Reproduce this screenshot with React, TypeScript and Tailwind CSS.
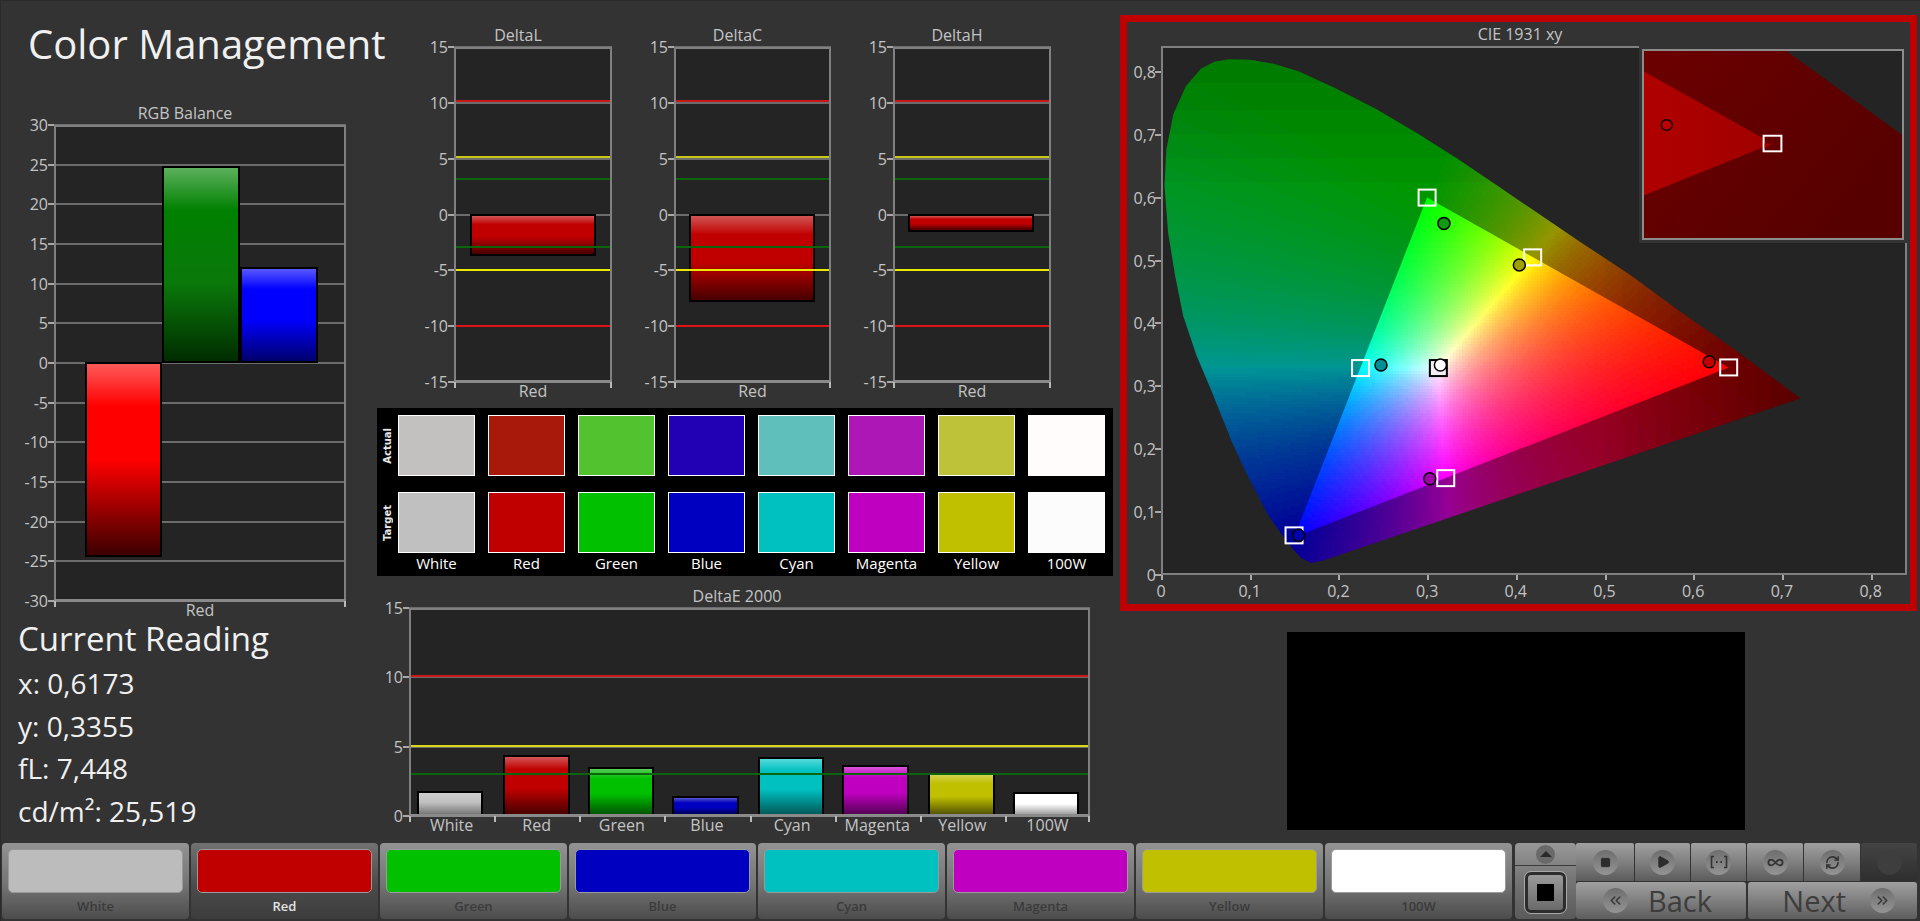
import { ChevronsLeft, ChevronsRight, Infinity as InfinityIcon, Play, RefreshCw, Square } from 'lucide-react';
import type { ReactNode } from 'react';

type Bar = { left: number; width: number; value: number; fill: string };
type Limit = { value: number; color: string };

const RED_BAR = 'bg-[linear-gradient(to_bottom,#d25555_0%,#c00000_22%,#c00000_55%,#480000_100%)]';

const DELTA_LIMITS: Limit[] = [
  { value: 10.15, color: 'bg-[#c81818]' },
  { value: 5.12, color: 'bg-[#c8c818]' },
  { value: 3.14, color: 'bg-[#0b660b]' },
  { value: -2.95, color: 'bg-[#0b660b]' },
  { value: -4.96, color: 'bg-[#e8e800]' },
  { value: -9.98, color: 'bg-[#e01414]' },
];

const E_LIMITS: Limit[] = [
  { value: 10.1, color: 'bg-[#c81818]' },
  { value: 5.02, color: 'bg-[#d8d818]' },
  { value: 3.03, color: 'bg-[#0b660b]' },
];

const PATCHES = [
  { name: 'White', actual: 'bg-[#c2c1c0]', target: 'bg-[#c0c0c0]', button: 'bg-[#bcbcbc]', bar: 'bg-[linear-gradient(to_bottom,#cdcdcd_0%,#c0c0c0_45%,#777777_100%)]', left: 8, width: 66, value: 1.75 },
  { name: 'Red', actual: 'bg-[#a8190c]', target: 'bg-[#c00000]', button: 'bg-[#c00000]', bar: RED_BAR, left: 94, width: 67, value: 4.3 },
  { name: 'Green', actual: 'bg-[#52c22e]', target: 'bg-[#00c000]', button: 'bg-[#00c000]', bar: 'bg-[linear-gradient(to_bottom,#55cc55_0%,#00c000_22%,#00c000_55%,#005500_100%)]', left: 179, width: 66, value: 3.45 },
  { name: 'Blue', actual: 'bg-[#2200b4]', target: 'bg-[#0000c0]', button: 'bg-[#0000c0]', bar: 'bg-[linear-gradient(to_bottom,#5555cc_0%,#0000c0_30%,#0000c0_60%,#000055_100%)]', left: 263, width: 67, value: 1.35 },
  { name: 'Cyan', actual: 'bg-[#5ebfbb]', target: 'bg-[#00c0c0]', button: 'bg-[#00c0c0]', bar: 'bg-[linear-gradient(to_bottom,#55dada_0%,#00c0c0_22%,#00c0c0_55%,#005a5a_100%)]', left: 349, width: 66, value: 4.2 },
  { name: 'Magenta', actual: 'bg-[#ad17b6]', target: 'bg-[#c000c0]', button: 'bg-[#c000c0]', bar: 'bg-[linear-gradient(to_bottom,#d855d8_0%,#c000c0_22%,#c000c0_55%,#550055_100%)]', left: 433, width: 67, value: 3.6 },
  { name: 'Yellow', actual: 'bg-[#bec238]', target: 'bg-[#c0c000]', button: 'bg-[#c0c000]', bar: 'bg-[linear-gradient(to_bottom,#d2d250_0%,#c0c000_22%,#c0c000_55%,#555500_100%)]', left: 519, width: 67, value: 3 },
  { name: '100W', actual: 'bg-[#fffcfb]', target: 'bg-[#fcfcfc]', button: 'bg-[#ffffff]', bar: 'bg-[linear-gradient(to_bottom,#ffffff_0%,#ffffff_50%,#a0a0a0_100%)]', left: 604, width: 66, value: 1.65 },
];

function Chart({
  title,
  axisClass,
  rootClass,
  plotClass,
  height,
  min,
  max,
  step,
  bars,
  limits = [],
  labels,
  dividers = false,
}: {
  title: string;
  axisClass: string;
  rootClass: string;
  plotClass: string;
  height: number;
  min: number;
  max: number;
  step: number;
  bars: Bar[];
  limits?: Limit[];
  labels: string[];
  dividers?: boolean;
}) {
  const yOf = (v: number) => ((max - v) / (max - min)) * height;
  const ticks: number[] = [];
  for (let v = max; v >= min; v -= step) ticks.push(v);
  const edges = dividers ? labels.length : 1;

  return (
    <div className={rootClass}>
      <div className="h-[21px] -translate-y-px text-center text-[16px] leading-[21px] text-[#c4c4c4]">{title}</div>
      <div className={axisClass}>
        <div className={`relative bg-[#242424] ${plotClass}`}>
          {ticks.map((v) => (
            <div key={v}>
              <div className="absolute left-0 right-0 h-[2px] bg-[#6c6c6c]" style={{ top: yOf(v) - 1 }} />
              <div className="absolute left-[-6px] h-[2px] w-[6px] bg-[#a8a8a8]" style={{ top: yOf(v) - 1 }} />
              <div
                className="absolute right-full mr-[6px] text-[16px] leading-[20px] text-[#c4c4c4]"
                style={{ top: yOf(v) - 10 }}
              >
                {v}
              </div>
            </div>
          ))}
          {bars.map((b) => {
            const top = yOf(Math.max(b.value, 0));
            const bottom = yOf(Math.min(b.value, 0));
            return (
              <div
                key={b.left}
                className={`absolute box-border border-2 border-black ${b.fill}`}
                style={{ left: b.left, width: b.width, top: top - 1, height: bottom - top + 1 }}
              />
            );
          })}
          {limits.map((l) => (
            <div
              key={l.value}
              className={`absolute left-0 right-0 h-[2px] ${l.color}`}
              style={{ top: yOf(l.value) - 1 }}
            />
          ))}
          <div className="absolute inset-0 border-2 border-b-0 border-[#808080]" />
          <div className="absolute bottom-[-1px] left-0 right-0 h-[3px] bg-[#8a8a8a]" />
          {Array.from({ length: edges + 1 }, (_, i) => (
            <div
              key={i}
              className="absolute bottom-[-6px] h-[6px] w-[2px] bg-[#b8b8b8]"
              style={{ left: `calc(${(i / edges) * 100}% - ${i === edges ? 2 : 0}px)` }}
            />
          ))}
        </div>
        <div className="-mt-px flex h-[20px]">
          {labels.map((l) => (
            <div key={l} className="flex-1 text-center text-[16px] leading-[20px] text-[#c4c4c4]">
              {l}
            </div>
          ))}
        </div>
      </div>
    </div>
  );
}

// chromaticity outline read off the diagram, not the real spectral locus
const LOCUS = [
  [0.183, 0.023], [0.169, 0.019], [0.158, 0.027], [0.149, 0.041], [0.137, 0.063], [0.12, 0.097],
  [0.097, 0.16], [0.08, 0.211], [0.057, 0.292], [0.04, 0.349], [0.025, 0.412], [0.016, 0.475],
  [0.008, 0.544], [0.004, 0.619], [0.006, 0.676], [0.014, 0.733], [0.028, 0.777], [0.045, 0.805],
  [0.06, 0.816], [0.077, 0.82], [0.1, 0.819], [0.126, 0.813], [0.155, 0.801], [0.195, 0.775],
  [0.241, 0.742], [0.287, 0.704], [0.333, 0.663], [0.379, 0.619], [0.425, 0.575], [0.471, 0.531],
  [0.528, 0.478], [0.586, 0.418], [0.643, 0.362], [0.721, 0.281],
];
const GAMUT = [[0.64, 0.33], [0.3, 0.6], [0.15, 0.06]];

const CIE_W = 746;
const CIE_H = 529;
const px = (x: number) => x * 887;
const py = (y: number) => CIE_H - y * 629;
const points = (list: number[][]) => list.map(([x, y]) => `${px(x).toFixed(1)},${py(y).toFixed(1)}`).join(' ');

function xyColor(x: number, y: number, dim: boolean) {
  const X = x / y;
  const Z = (1 - x - y) / y;
  const rgb = [
    3.2406 * X - 1.5372 - 0.4986 * Z,
    -0.9689 * X + 1.8758 + 0.0415 * Z,
    0.0557 * X - 0.204 + 1.057 * Z,
  ].map((c) => Math.max(c, 0));
  const top = Math.max(...rgb);
  let k = 1;
  if (dim) {
    k = 0.58;
    if (x > 0.5) k -= (x - 0.5) * 1.05;
    if (y > 0.62) k -= (y - 0.62) * 0.5;
  }
  return rgb.map((c) => Math.round(((c / top) * k * 255) / 5) * 5);
}

// small cells merged into one path per colour, the clip paths give the clean edge
function buildCells(x0: number, x1: number, y0: number, y1: number, dim: boolean) {
  const groups = new Map<string, string>();
  const size = 3;
  for (let sx = px(x0); sx < px(x1); sx += size) {
    for (let sy = py(y1); sy < py(y0); sy += size) {
      const x = (sx + size / 2) / 887;
      const y = (CIE_H - sy - size / 2) / 629;
      if (y <= 0.002) continue;
      const c = xyColor(x, y, dim);
      const key = `rgb(${c[0]},${c[1]},${c[2]})`;
      groups.set(key, (groups.get(key) ?? '') + `M${sx.toFixed(1)} ${sy.toFixed(1)}h${size}v${size}h-${size}z`);
    }
  }
  return Array.from(groups.entries());
}

const DIM_CELLS = buildCells(0, 0.73, 0, 0.83, true);
const BRIGHT_CELLS = buildCells(0.14, 0.65, 0.05, 0.61, false);

const TARGETS = [
  { x: 0.3, y: 0.6 },
  { x: 0.419, y: 0.505 },
  { x: 0.225, y: 0.329 },
  { x: 0.64, y: 0.33 },
  { x: 0.321, y: 0.154 },
  { x: 0.15, y: 0.063 },
];
const READINGS = [
  { x: 0.319, y: 0.559, fill: '#0f9a0f' },
  { x: 0.404, y: 0.493, fill: '#a0a000' },
  { x: 0.248, y: 0.334, fill: '#008f96' },
  { x: 0.618, y: 0.339, fill: '#c00000' },
  { x: 0.303, y: 0.153, fill: '#a000a8' },
  { x: 0.155, y: 0.063, fill: '#0000b0' },
];

function CieDiagram() {
  return (
    <svg viewBox={`0 0 ${CIE_W} ${CIE_H}`} className="absolute inset-0 h-full w-full">
      <defs>
        <clipPath id="locus">
          <polygon points={points(LOCUS)} />
        </clipPath>
        <clipPath id="gamut">
          <polygon points={points(GAMUT)} />
        </clipPath>
      </defs>
      <g clipPath="url(#locus)" shapeRendering="crispEdges">
        {DIM_CELLS.map(([fill, d]) => (
          <path key={fill} d={d} fill={fill} />
        ))}
      </g>
      <g clipPath="url(#gamut)" shapeRendering="crispEdges">
        {BRIGHT_CELLS.map(([fill, d]) => (
          <path key={fill} d={d} fill={fill} />
        ))}
      </g>
      {TARGETS.map((t) => (
        <rect key={t.x} x={px(t.x) - 8.5} y={py(t.y) - 8} width={17} height={16} fill="none" stroke="#fff" strokeWidth={2} />
      ))}
      <rect x={px(0.3127) - 8.5} y={py(0.329) - 8} width={17} height={16} fill="#f4ecf4" stroke="#000" strokeWidth={2} />
      {READINGS.map((r) => (
        <circle key={r.x} cx={px(r.x)} cy={py(r.y)} r={6} fill={r.fill} stroke="#000" strokeWidth={1.5} />
      ))}
      <circle cx={px(0.315)} cy={py(0.334)} r={6} fill="#fff" stroke="#000" strokeWidth={1.5} />
    </svg>
  );
}

function Inset() {
  return (
    <div className="absolute right-0 top-0 h-[197px] w-[268px] bg-[#333333] p-[3px]">
      <div className="h-full w-full border-2 border-[#8c8c8c] bg-[#242424]">
        <svg viewBox="0 0 261 192" preserveAspectRatio="none" className="block h-full w-full">
          <defs>
            <linearGradient id="wedge" x1="0" x2="1" y1="0" y2="0">
              <stop offset="0" stopColor="#b00000" />
              <stop offset="1" stopColor="#a00000" />
            </linearGradient>
            <linearGradient id="base" x1="0" x2="1" y1="0" y2="0.6">
              <stop offset="0" stopColor="#6c0000" />
              <stop offset="1" stopColor="#560000" />
            </linearGradient>
          </defs>
          <polygon points="0,0 144,0 261,86 261,192 0,192" fill="url(#base)" />
          <polygon points="0,21 130,95 0,148" fill="url(#wedge)" />
          <rect x={121} y={87} width={18} height={16} fill="#650000" stroke="#fff" strokeWidth={2} />
          <polygon points="122,95 130,95 122,100" fill="#a00000" />
          <circle cx={23} cy={76} r={5.5} fill="#c00000" stroke="#000" strokeWidth={1.5} />
        </svg>
      </div>
    </div>
  );
}

function RoundIcon({ children, dark = false }: { children?: ReactNode; dark?: boolean }) {
  return (
    <div
      className={`flex h-[25px] w-[25px] items-center justify-center rounded-full ${
        dark
          ? 'bg-[#3e3e3e]'
          : 'bg-[linear-gradient(to_bottom,#6e6e6e,#949494)]'
      }`}
    >
      {children}
    </div>
  );
}

function ControlButton({ children, widthClass }: { children: ReactNode; widthClass: string }) {
  return (
    <div className={`flex h-full items-center justify-center rounded-t-[2px] bg-[linear-gradient(to_bottom,#a0a0a0,#808080_50%,#5c5c5c)] ${widthClass}`}>
      {children}
    </div>
  );
}

function Footer() {
  return (
    <div className="flex h-[76px] pl-px">
      <div className="flex gap-[2px]">
        {PATCHES.map((p) => {
          const active = p.name === 'Red';
          return (
            <div
              key={p.name}
              className={`flex w-[187px] flex-col rounded-[4px] px-[6px] pt-[6px] ${
                active
                  ? 'bg-[linear-gradient(to_bottom,#727272,#4c4c4c_55%,#3c3c3c)]'
                  : 'bg-[linear-gradient(to_bottom,#939393,#747474_55%,#4c4c4c)]'
              }`}
            >
              <div className={`h-[46px] rounded-[5px] border border-[#9a9a9a] ${p.button}`} />
              <div
                className={`flex-1 text-center text-[13px] font-semibold leading-[26px] ${
                  active ? 'text-[#e4e4e4]' : 'text-[#3b3b3b]'
                }`}
              >
                {p.name}
              </div>
            </div>
          );
        })}
      </div>
      <div className="ml-[3px] flex w-[61px] flex-col rounded-[4px] bg-[linear-gradient(to_bottom,#989898,#777777_45%,#5a5a5a)]">
        <div className="flex h-[23px] items-center justify-center border-b border-[#3a3a3a]">
          <div className="flex h-[19px] w-[19px] items-center justify-center rounded-full bg-[#6a6a6a]">
            <div className="h-0 w-0 border-x-[6px] border-b-[6px] border-x-transparent border-b-[#2a2a2a]" />
          </div>
        </div>
        <div className="flex flex-1 items-center justify-center">
          <div className="flex h-[41px] w-[41px] items-center justify-center rounded-[6px] border-[3px] border-[#2c2c2c] bg-[linear-gradient(to_bottom,#9a9a9a,#6a6a6a)] outline-1 outline-[#a8a8a8]">
            <div className="h-[17px] w-[17px] bg-black" />
          </div>
        </div>
      </div>
      <div className="flex w-[341px] flex-col gap-px">
        <div className="flex h-[38px] gap-px">
          <ControlButton widthClass="w-[58px]">
            <RoundIcon>
              <Square size={11} fill="#2c2c2c" stroke="#2c2c2c" />
            </RoundIcon>
          </ControlButton>
          <ControlButton widthClass="w-[55px]">
            <RoundIcon>
              <Play size={14} fill="#2c2c2c" stroke="#2c2c2c" />
            </RoundIcon>
          </ControlButton>
          <ControlButton widthClass="w-[55px]">
            <RoundIcon>
              <svg width="18" height="14" viewBox="0 0 18 14" fill="none" stroke="#333333" strokeWidth="1.6">
                <path d="M4 1.5H1.5v11H4M14 1.5h2.5v11H14" />
                <path d="M6 7h1.6M10.4 7H12" strokeWidth="2" />
              </svg>
            </RoundIcon>
          </ControlButton>
          <ControlButton widthClass="w-[56px]">
            <RoundIcon>
              <InfinityIcon size={17} stroke="#333333" strokeWidth={2.5} />
            </RoundIcon>
          </ControlButton>
          <ControlButton widthClass="w-[56px]">
            <RoundIcon>
              <RefreshCw size={15} stroke="#333333" strokeWidth={2.5} />
            </RoundIcon>
          </ControlButton>
          <div className="flex h-full flex-1 items-center justify-center rounded-[3px] bg-[linear-gradient(to_bottom,#444444,#2e2e2e)]">
            <RoundIcon dark />
          </div>
        </div>
        <div className="flex flex-1 gap-[2px]">
          <div className="flex w-[170px] items-center rounded-[3px] bg-[linear-gradient(to_bottom,#a0a0a0,#7c7c7c_55%,#5e5e5e)] pl-[27px]">
            <RoundIcon>
              <ChevronsLeft size={17} stroke="#383838" strokeWidth={2.2} />
            </RoundIcon>
            <span className="ml-[20px] text-[29px] font-medium leading-none text-[#3d3d3d]">Back</span>
          </div>
          <div className="flex flex-1 items-center justify-end rounded-[3px] bg-[linear-gradient(to_bottom,#a0a0a0,#7c7c7c_55%,#5e5e5e)] pr-[22px]">
            <span className="mr-[24px] text-[29px] font-medium leading-none text-[#3d3d3d]">Next</span>
            <RoundIcon>
              <ChevronsRight size={17} stroke="#383838" strokeWidth={2.2} />
            </RoundIcon>
          </div>
        </div>
      </div>
    </div>
  );
}

const DELTAS = [
  { title: 'DeltaL', value: -3.68, left: 16, root: 'w-[188px]', plot: 'w-[158px] h-[335px]' },
  { title: 'DeltaC', value: -7.8, left: 15, root: 'w-[187px]', plot: 'w-[157px] h-[335px]' },
  { title: 'DeltaH', value: -1.55, left: 15, root: 'w-[188px]', plot: 'w-[158px] h-[335px]' },
];

export default function App() {
  return (
    <div className="flex h-[921px] w-[1920px] flex-col overflow-hidden border-l border-t border-[#2a2a2a] bg-[#333333] font-['Open_Sans','Noto_Sans',sans-serif]">
      <div className="flex h-[842px]">
        {/* left column */}
        <div className="w-[376px] shrink-0">
          <div className="flex h-[86px] items-center whitespace-nowrap pl-[27px] text-[40px] text-[#f0f0f0]">Color Management</div>
          <div className="pl-[23px] pt-[17px]">
            <Chart
              title="RGB Balance"
              rootClass="w-[322px]"
              axisClass="pl-[30px]"
              plotClass="w-[292px] h-[476px]"
              height={476}
              min={-30}
              max={30}
              step={5}
              labels={['Red']}
              bars={[
                { left: 31, width: 77, value: -24.5, fill: 'bg-[linear-gradient(to_bottom,#ff5a5a_0%,#ff0000_22%,#ff0000_50%,#3c0000_100%)]' },
                { left: 108, width: 78, value: 24.75, fill: 'bg-[linear-gradient(to_bottom,#5cb05c_0%,#008000_22%,#0a780a_60%,#002c00_100%)]' },
                { left: 186, width: 78, value: 12, fill: 'bg-[linear-gradient(to_bottom,#5858ff_0%,#0000ff_22%,#0000ff_55%,#00006c_100%)]' },
              ]}
            />
          </div>
          <div className="pl-[17px] text-[#f0f0f0]">
            <div className="mb-[4px] text-[33px] leading-[38px]">Current Reading</div>
            <div className="flex flex-col text-[28px] leading-[42.5px]">
              <span>x: 0,6173</span>
              <span>y: 0,3355</span>
              <span>fL: 7,448</span>
              <span>cd/m²: 25,519</span>
            </div>
          </div>
        </div>

        {/* middle column */}
        <div className="w-[736px] shrink-0 pt-[25px]">
          <div className="flex gap-[32px] pl-[47px]">
            {DELTAS.map((d) => (
              <Chart
                key={d.title}
                title={d.title}
                rootClass={d.root}
                axisClass="pl-[30px]"
                plotClass={d.plot}
                height={335}
                min={-15}
                max={15}
                step={5}
                labels={['Red']}
                limits={DELTA_LIMITS}
                bars={[{ left: d.left, width: 126, value: d.value, fill: RED_BAR }]}
              />
            ))}
          </div>

          <div className="mt-[7px] flex h-[168px] bg-black">
            <div className="flex w-[21px] flex-col pt-[7px] font-['DejaVu_Sans',sans-serif] text-[10px] font-bold leading-none text-[#e8e8e8]">
              <div className="flex h-[61px] items-center justify-center">
                <span className="rotate-180 [writing-mode:vertical-rl]">Actual</span>
              </div>
              <div className="mt-[16px] flex h-[61px] items-center justify-center">
                <span className="rotate-180 [writing-mode:vertical-rl]">Target</span>
              </div>
            </div>
            <div className="grid flex-1 grid-cols-8 gap-x-[13px] pr-[8px] pt-[7px]">
              {PATCHES.map((p) => (
                <div key={p.name} className="flex flex-col">
                  <div className={`h-[61px] border border-white ${p.actual}`} />
                  <div className={`mt-[16px] h-[61px] border border-white ${p.target}`} />
                  <div className="text-center text-[15px] leading-[20px] text-white">{p.name}</div>
                </div>
              ))}
            </div>
          </div>

          <div className="pt-[11px]">
            <Chart
              title="DeltaE 2000"
              rootClass="ml-[7px] w-[706px]"
              axisClass="pl-[25px]"
              plotClass="w-[681px] h-[208px]"
              height={208}
              min={0}
              max={15}
              step={5}
              dividers
              limits={E_LIMITS}
              labels={PATCHES.map((p) => p.name)}
              bars={PATCHES.map((p) => ({ left: p.left, width: p.width, value: p.value, fill: p.bar }))}
            />
          </div>
        </div>

        {/* right column */}
        <div className="ml-[7px] w-[797px] shrink-0 pt-[14px]">
          <div className="h-[596px] border-[7px] border-[#c00000]">
            <div className="h-[21px] pt-[2px] pl-[6px] pr-[3px] text-center text-[16px] leading-[21px] text-[#c4c4c4]">
              CIE 1931 xy
            </div>
            <div className="relative ml-[34px] mt-[3px] h-[529px] w-[746px] bg-[#242424]">
              <CieDiagram />
              <div className="absolute inset-0 border-2 border-[#808080]" />
              <Inset />
              {[0, 0.1, 0.2, 0.3, 0.4, 0.5, 0.6, 0.7, 0.8].map((v) => {
                const text = String(v).replace('.', ',');
                return (
                  <div key={v}>
                    <div className="absolute left-[-6px] h-[2px] w-[6px] bg-[#a8a8a8]" style={{ top: py(v) - 1 }} />
                    <div
                      className="absolute right-full mr-[5px] text-[16px] leading-[20px] text-[#c4c4c4]"
                      style={{ top: py(v) - 10 }}
                    >
                      {text}
                    </div>
                    <div className="absolute bottom-[-5px] h-[5px] w-[2px] bg-[#a8a8a8]" style={{ left: px(v) }} />
                    <div
                      className="absolute top-full mt-[6px] w-[40px] -translate-x-1/2 text-center text-[16px] leading-[20px] text-[#c4c4c4]"
                      style={{ left: px(v) }}
                    >
                      {text}
                    </div>
                  </div>
                );
              })}
            </div>
          </div>
          <div className="ml-[167px] mt-[21px] h-[198px] w-[458px] bg-black" />
        </div>
      </div>
      <Footer />
    </div>
  );
}
